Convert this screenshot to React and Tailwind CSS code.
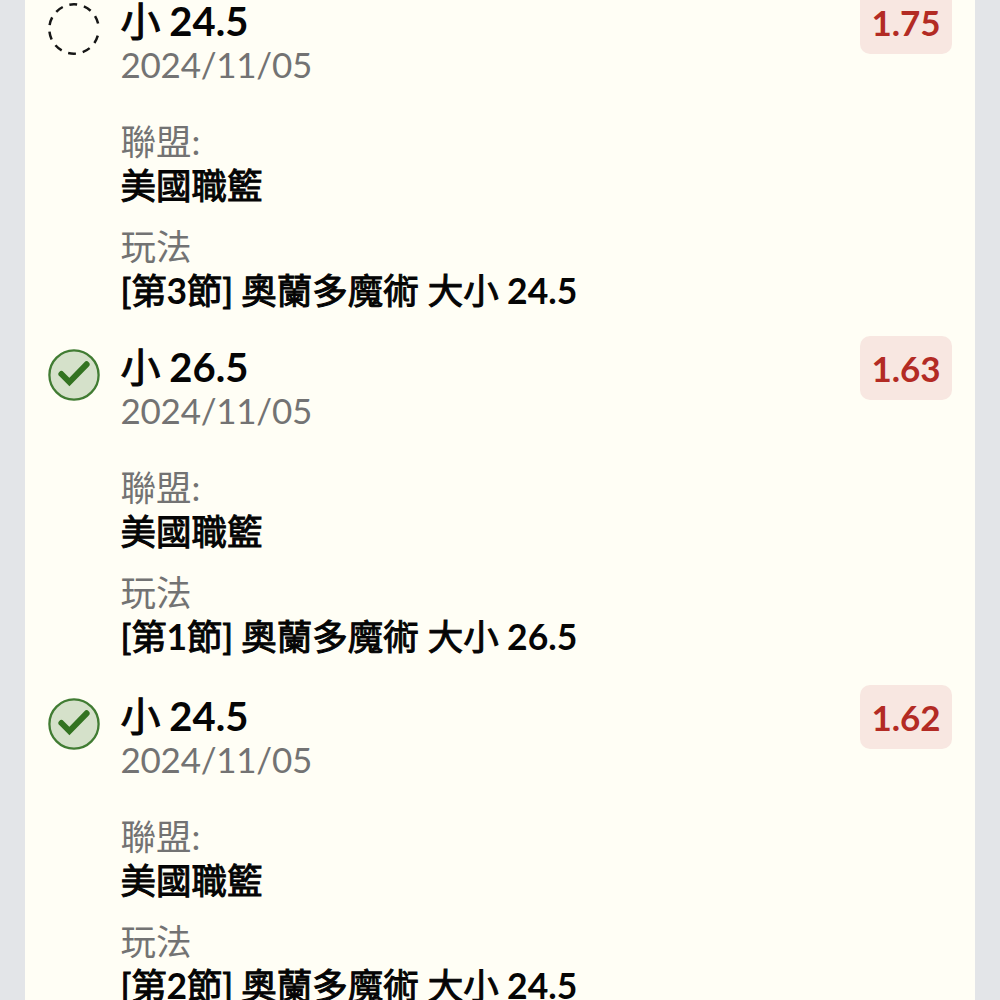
const bets = [
  { side: "小", total: "24.5", odds: "1.75", period: 3, won: false, height: "h-[346px]" },
  { side: "小", total: "26.5", odds: "1.63", period: 1, won: true, height: "h-[349px]" },
  { side: "小", total: "24.5", odds: "1.62", period: 2, won: true, height: "h-[348px]" },
];

function StatusIcon({ won }) {
  if (!won) {
    return (
      <svg viewBox="0 0 52 52" className="w-[52px] h-[52px]" fill="none">
        <circle
          cx="26"
          cy="26"
          r="24.7"
          stroke="#161616"
          strokeWidth="2.5"
          strokeDasharray="8 6.87"
          strokeDashoffset="-6.8"
        />
      </svg>
    );
  }
  return (
    <svg viewBox="0 0 52 52" className="w-[52px] h-[52px]" fill="none">
      <circle cx="26" cy="26" r="24.6" fill="#d5e1ca" stroke="#417c33" strokeWidth="2.3" />
      <path d="M13.4 25l8 8L38.6 15.3" stroke="#337321" strokeWidth="6" strokeLinecap="round" />
    </svg>
  );
}

// Medium weight for Chinese glyphs, sits between regular and bold
function Han({ children }) {
  return <span className="font-normal [-webkit-text-stroke:1px_currentColor]">{children}</span>;
}

function BetItem({ bet }) {
  return (
    <div className={`flex shrink-0 items-start ${bet.height}`}>
      <div className="mt-[12.5px] w-[72.5px]">
        <StatusIcon won={bet.won} />
      </div>
      <div className="flex-1 whitespace-nowrap">
        <p className="h-[44px] text-[40px] leading-[62px] font-bold [word-spacing:-1px]">
          <Han>{bet.side}</Han> {bet.total}
        </p>
        <p className="text-[35px] leading-[60px] tracking-[-0.25px] text-[#737373]">2024/11/05</p>

        {/* League */}
        <p className="mt-[26px] text-[35.5px] leading-[44px] text-[#737373]">聯盟:</p>
        <p className="text-[35.5px] leading-[44px]">
          <Han>美國職籃</Han>
        </p>

        {/* Market */}
        <p className="mt-[17px] text-[35.5px] leading-[44px] text-[#737373]">玩法</p>
        <p className="text-[35.5px] leading-[44px] font-bold [word-spacing:-0.2px]">
          <span className="tracking-[-0.2px]">
            <Han>[第</Han>{bet.period}<Han>節]</Han>
          </span>{" "}
          <Han>奧蘭多魔術 大小</Han> {bet.total}
        </p>
      </div>
      <span className="flex h-16 w-[92px] items-center justify-center rounded-[10px] bg-[#f8e7e1] pt-px text-[35px] font-bold text-[#b32b24]">
        {bet.odds}
      </span>
    </div>
  );
}

export default function App() {
  return (
    <div className="h-[1000px] overflow-hidden bg-[#e3e5e8] px-[25px] font-['Lato','Noto_Sans_CJK_TC',sans-serif] text-[#050505]">
      <div className="flex h-full flex-col bg-[#fffef5] px-[23px]">
        <div className="-mt-2.5">
          {bets.map((bet) => (
            <BetItem key={bet.odds} bet={bet} />
          ))}
        </div>
      </div>
    </div>
  );
}
